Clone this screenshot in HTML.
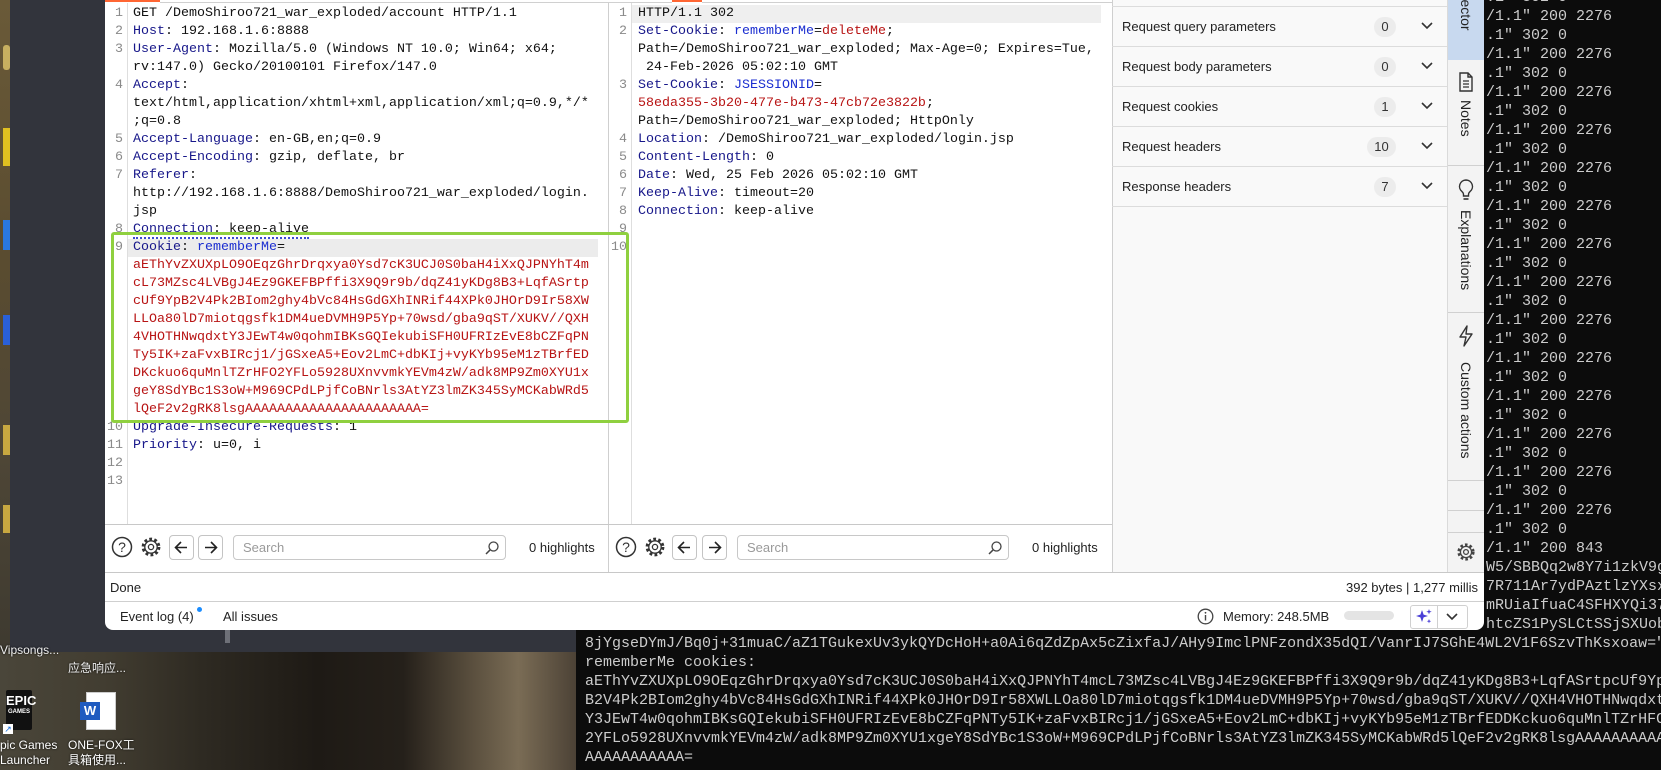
<!DOCTYPE html>
<html><head><meta charset="utf-8"><style>
*{margin:0;padding:0;box-sizing:border-box}
body{width:1661px;height:770px;overflow:hidden;position:relative;background:#0c0c0c;font-family:"Liberation Sans",sans-serif}
.abs{position:absolute}
.term{position:absolute;font-family:"Liberation Mono",monospace;font-size:15px;line-height:19px;color:#cccccc;white-space:pre}
.ed{position:absolute;font-family:"Liberation Mono",monospace;font-size:13.33px;line-height:18px;white-space:pre;color:#111}
.ln{position:absolute;font-family:"Liberation Mono",monospace;font-size:13.33px;line-height:18px;color:#8a8a8a;text-align:right;width:18px;white-space:pre}
.h{color:#17178a}.k{color:#1b2ed0}.v{color:#b81414}
.row{position:absolute;left:1112px;width:335px;height:40px;border-bottom:1px solid #dcdcdc;font-size:13px;color:#222}
.row span.t{position:absolute;left:10px;top:12px}
.badge{position:absolute;top:10px;height:20px;border-radius:10px;background:#ececec;font-size:13px;text-align:center;line-height:20px;color:#333}
.chev{position:absolute;left:308px;top:14px}
.vt{position:absolute;left:1447px;width:37px;writing-mode:vertical-rl;font-size:14px;color:#222;text-align:left}
.btn{position:absolute;width:25px;height:25px;border:1px solid #c4c4c4;border-radius:4px;background:#fff}
.search{position:absolute;height:25px;border:1px solid #c8c8c8;border-radius:4px;background:#fff;font-size:13px;color:#9a9a9a;padding:4px 0 0 9px}
.sep{position:absolute;background:#d0d0d0}
</style></head><body>

<div class="term" style="left:1486px;top:-12.5px">.1" 302 0
/1.1" 200 2276
.1" 302 0
/1.1" 200 2276
.1" 302 0
/1.1" 200 2276
.1" 302 0
/1.1" 200 2276
.1" 302 0
/1.1" 200 2276
.1" 302 0
/1.1" 200 2276
.1" 302 0
/1.1" 200 2276
.1" 302 0
/1.1" 200 2276
.1" 302 0
/1.1" 200 2276
.1" 302 0
/1.1" 200 2276
.1" 302 0
/1.1" 200 2276
.1" 302 0
/1.1" 200 2276
.1" 302 0
/1.1" 200 2276
.1" 302 0
/1.1" 200 2276
.1" 302 0
/1.1" 200 843
W5/SBBQq2w8Y7i1zkV9gXq
7R711Ar7ydPAztlzYXsxQ
mRUiaIfuaC4SFHXYQi37b
htcZS1PySLCtSSjSXUobP</div>

<div class="term" style="left:585px;top:633.5px">8jYgseDYmJ/Bq0j+31muaC/aZ1TGukexUv3ykQYDcHoH+a0Ai6qZdZpAx5cZixfaJ/AHy9ImclPNFzondX35dQI/VanrIJ7SGhE4WL2V1F6SzvThKsxoaw="
rememberMe cookies:
aEThYvZXUXpLO9OEqzGhrDrqxya0Ysd7cK3UCJ0S0baH4iXxQJPNYhT4mcL73MZsc4LVBgJ4Ez9GKEFBPffi3X9Q9r9b/dqZ41yKDg8B3+LqfASrtpcUf9Yp
B2V4Pk2BIom2ghy4bVc84HsGdGXhINRif44XPk0JHOrD9Ir58XWLLOa80lD7miotqgsfk1DM4ueDVMH9P5Yp+70wsd/gba9qST/XUKV//QXH4VHOTHNwqdxt
Y3JEwT4w0qohmIBKsGQIekubiSFH0UFRIzEvE8bCZFqPNTy5IK+zaFvxBIRcj1/jGSxeA5+Eov2LmC+dbKIj+vyKYb95eM1zTBrfEDDKckuo6quMnlTZrHFO
2YFLo5928UXnvvmkYEVm4zW/adk8MP9Zm0XYU1xgeY8SdYBc1S3oW+M969CPdLPjfCoBNrls3AtYZ3lmZK345SyMCKabWRd5lQeF2v2gRK8lsgAAAAAAAAAAA
AAAAAAAAAAA=</div>

<div class="abs" style="left:0;top:652px;width:576px;height:118px;background:linear-gradient(90deg,#4a463a 0%,#423d31 18%,#2e2a22 35%,#1e1a15 55%,#25201a 70%,#5a4f3e 82%,#7a6c55 90%,#4c4236 100%)"></div>
<div class="abs" style="left:0;top:0;width:10px;height:652px;background:linear-gradient(180deg,#6a5a38,#5a4c30 40%,#4e4636 70%,#3e3a30)"></div>
<div class="abs" style="left:3px;top:45px;width:7px;height:25px;background:#c8b060;border-radius:3px"></div>
<div class="abs" style="left:3px;top:128px;width:7px;height:38px;background:#e0c020"></div>
<div class="abs" style="left:3px;top:220px;width:7px;height:30px;background:#2a78e0"></div>
<div class="abs" style="left:3px;top:315px;width:7px;height:30px;background:#2a60d8"></div>
<div class="abs" style="left:3px;top:425px;width:7px;height:30px;background:#c8a840"></div>
<div class="abs" style="left:3px;top:505px;width:7px;height:28px;background:#c8a840"></div>

<div class="abs" style="left:10px;top:0;width:566px;height:652px;background:#32343c"></div>
<div class="abs" style="left:225px;top:630px;width:5px;height:13px;background:#6e7078"></div>
<div class="abs" style="left:0;top:643px;width:60px;font-size:12px;color:#eee;text-shadow:0 0 2px #000">Vipsongs...</div>
<div class="abs" style="left:68px;top:659px;width:70px;font-size:12px;color:#eee;text-shadow:0 0 2px #000;font-family:'Liberation Sans','Noto Sans CJK SC',sans-serif">应急响应...</div>

<div class="abs" style="left:6px;top:690px;width:26px;height:40px;background:#111;border-radius:2px;color:#fff;font-size:13px;font-weight:bold;text-align:center;line-height:14px;padding-top:4px">EPIC<div style="font-size:6px;line-height:8px">GAMES</div></div>
<div class="abs" style="left:3px;top:724px;width:10px;height:10px;background:#fff;color:#1a6fd8;font-size:9px;line-height:10px;text-align:center">↗</div>
<div class="abs" style="left:0;top:738px;font-size:12px;color:#fff;line-height:15px;text-shadow:0 0 2px #000">pic Games<br>Launcher</div>
<div class="abs" style="left:86px;top:692px;width:30px;height:38px;background:#fff;border:1px solid #ccc"></div>
<div class="abs" style="left:80px;top:702px;width:20px;height:18px;background:#1f5bc0;color:#fff;font-weight:bold;font-size:13px;text-align:center;line-height:18px">W</div>
<div class="abs" style="left:68px;top:738px;font-size:12px;color:#fff;line-height:15px;text-shadow:0 0 2px #000;font-family:'Liberation Sans','Noto Sans CJK SC',sans-serif">ONE-FOX工<br>具箱使用...</div>

<div class="abs" style="left:105px;top:0;width:1379px;height:630px;background:#fff;border-bottom-left-radius:8px;border-bottom-right-radius:8px;overflow:hidden"></div>
<div class="abs" style="left:105px;top:0;width:55px;height:2px;background:#ff6633"></div>
<div class="abs" style="left:672px;top:0;width:30px;height:2px;background:#ff6633"></div>
<div class="sep" style="left:160px;top:2px;width:512px;height:1px"></div>
<div class="sep" style="left:702px;top:2px;width:410px;height:1px"></div>

<div class="sep" style="left:127px;top:3px;width:1px;height:521px;background:#dedede"></div>
<div class="abs" style="left:128px;top:239px;width:470px;height:18px;background:#ececec"></div>
<div class="abs" style="left:632px;top:5px;width:469px;height:18px;background:#efefef"></div>
<div class="ln" style="left:105px;top:5px">1
2
3

4


5
6
7


8
9









10
11
12
13</div>
<div class="ed" style="left:133px;top:5px">GET /DemoShiroo721_war_exploded/account HTTP/1.1
<span class="h">Host</span>: 192.168.1.6:8888
<span class="h">User-Agent</span>: Mozilla/5.0 (Windows NT 10.0; Win64; x64;
rv:147.0) Gecko/20100101 Firefox/147.0
<span class="h">Accept</span>:
text/html,application/xhtml+xml,application/xml;q=0.9,*/*
;q=0.8
<span class="h">Accept-Language</span>: en-GB,en;q=0.9
<span class="h">Accept-Encoding</span>: gzip, deflate, br
<span class="h">Referer</span>:
http://192.168.1.6:8888/DemoShiroo721_war_exploded/login.
jsp
<span class="h" style="border-bottom:2px dotted #3a4bd0">Connection</span><span style="border-bottom:2px dotted #3a4bd0">: keep-alive</span>
<span class="h">Cookie</span>: <span class="k">rememberMe</span>=
<span class="v">aEThYvZXUXpLO9OEqzGhrDrqxya0Ysd7cK3UCJ0S0baH4iXxQJPNYhT4m
cL73MZsc4LVBgJ4Ez9GKEFBPffi3X9Q9r9b/dqZ41yKDg8B3+LqfASrtp
cUf9YpB2V4Pk2BIom2ghy4bVc84HsGdGXhINRif44XPk0JHOrD9Ir58XW
LLOa80lD7miotqgsfk1DM4ueDVMH9P5Yp+70wsd/gba9qST/XUKV//QXH
4VHOTHNwqdxtY3JEwT4w0qohmIBKsGQIekubiSFH0UFRIzEvE8bCZFqPN
Ty5IK+zaFvxBIRcj1/jGSxeA5+Eov2LmC+dbKIj+vyKYb95eM1zTBrfED
DKckuo6quMnlTZrHFO2YFLo5928UXnvvmkYEVm4zW/adk8MP9Zm0XYU1x
geY8SdYBc1S3oW+M969CPdLPjfCoBNrls3AtYZ3lmZK345SyMCKabWRd5
lQeF2v2gRK8lsgAAAAAAAAAAAAAAAAAAAAAA=</span>
<span class="h">Upgrade-Insecure-Requests</span>: 1
<span class="h">Priority</span>: u=0, i</div>

<div class="sep" style="left:608px;top:3px;width:1px;height:569px;background:#cfcfcf"></div>

<div class="sep" style="left:631px;top:3px;width:1px;height:521px;background:#dedede"></div>
<div class="ln" style="left:609px;top:5px">1
2


3


4
5
6
7
8
9
10</div>
<div class="ed" style="left:638px;top:5px">HTTP/1.1 302
<span class="h">Set-Cookie</span>: <span class="k">rememberMe</span>=<span class="v">deleteMe</span>;
Path=/DemoShiroo721_war_exploded; Max-Age=0; Expires=Tue,
 24-Feb-2026 05:02:10 GMT
<span class="h">Set-Cookie</span>: <span class="k">JSESSIONID</span>=
<span class="v">58eda355-3b20-477e-b473-47cb72e3822b</span>;
Path=/DemoShiroo721_war_exploded; HttpOnly
<span class="h">Location</span>: /DemoShiroo721_war_exploded/login.jsp
<span class="h">Content-Length</span>: 0
<span class="h">Date</span>: Wed, 25 Feb 2026 05:02:10 GMT
<span class="h">Keep-Alive</span>: timeout=20
<span class="h">Connection</span>: keep-alive</div>

<div class="abs" style="left:111px;top:232px;width:518px;height:191px;border:3px solid #8fd03f;border-radius:3px"></div>

<div class="abs" style="left:1112px;top:0;width:335px;height:572px;background:#f9f9f9;border-left:1px solid #cfcfcf"></div>
<div class="sep" style="left:1112px;top:6px;width:335px;height:1px;background:#dcdcdc"></div>
<div class="row" style="top:7px"><span class="t">Request query parameters</span><div class="badge" style="left:262px;width:22px">0</div><svg class="chev" width="14" height="10"><polyline points="2,2 7,7 12,2" fill="none" stroke="#333" stroke-width="1.6"/></svg></div>
<div class="row" style="top:47px"><span class="t">Request body parameters</span><div class="badge" style="left:262px;width:22px">0</div><svg class="chev" width="14" height="10"><polyline points="2,2 7,7 12,2" fill="none" stroke="#333" stroke-width="1.6"/></svg></div>
<div class="row" style="top:87px"><span class="t">Request cookies</span><div class="badge" style="left:262px;width:22px">1</div><svg class="chev" width="14" height="10"><polyline points="2,2 7,7 12,2" fill="none" stroke="#333" stroke-width="1.6"/></svg></div>
<div class="row" style="top:127px"><span class="t">Request headers</span><div class="badge" style="left:255px;width:29px">10</div><svg class="chev" width="14" height="10"><polyline points="2,2 7,7 12,2" fill="none" stroke="#333" stroke-width="1.6"/></svg></div>
<div class="row" style="top:167px"><span class="t">Response headers</span><div class="badge" style="left:262px;width:22px">7</div><svg class="chev" width="14" height="10"><polyline points="2,2 7,7 12,2" fill="none" stroke="#333" stroke-width="1.6"/></svg></div>

<div class="abs" style="left:1447px;top:0;width:37px;height:572px;background:#f3f3f3;border-left:1px solid #dadada"></div>
<div class="abs" style="left:1448px;top:0;width:36px;height:60px;background:#c8d9ef"></div>
<div class="vt" style="top:-27px;line-height:37px">Inspector</div>
<div class="sep" style="left:1448px;top:165px;width:36px;height:1px"></div>
<svg class="abs" style="left:1458px;top:72px" width="16" height="20"><path d="M2 1h8l4 4v14H2z M10 1v4h4" fill="none" stroke="#333" stroke-width="1.4"/><path d="M5 9h6M5 12h6M5 15h6" stroke="#333" stroke-width="1.2"/></svg>
<div class="vt" style="top:100px;line-height:37px">Notes</div>
<svg class="abs" style="left:1457px;top:178px" width="18" height="24"><path d="M9 2a6.5 6.5 0 0 0-4 11.6c1 .9 1.5 1.8 1.5 3V18h5v-1.4c0-1.2.5-2.1 1.5-3A6.5 6.5 0 0 0 9 2z" fill="none" stroke="#333" stroke-width="1.4"/><path d="M6.5 21h5" stroke="#333" stroke-width="1.6"/></svg>
<div class="vt" style="top:210px;line-height:37px">Explanations</div>
<div class="sep" style="left:1448px;top:312px;width:36px;height:1px"></div>
<svg class="abs" style="left:1457px;top:325px" width="18" height="22"><path d="M10 1L3 12h6l-2 9 8-12H9z" fill="none" stroke="#333" stroke-width="1.4" stroke-linejoin="round"/></svg>
<div class="vt" style="top:362px;line-height:37px">Custom actions</div>
<div class="sep" style="left:1448px;top:480px;width:36px;height:1px"></div>
<div class="sep" style="left:1448px;top:510px;width:36px;height:1px"></div>
<div class="sep" style="left:1448px;top:532px;width:36px;height:1px"></div>
<svg class="abs" style="left:1456px;top:542px" width="20" height="20"><circle cx="10" cy="10" r="7.3" fill="none" stroke="#444" stroke-width="2.6" stroke-dasharray="2.6 2.13"/><circle cx="10" cy="10" r="5.6" fill="#f3f3f3" stroke="#444" stroke-width="1.3"/><circle cx="10" cy="10" r="2.4" fill="none" stroke="#444" stroke-width="1.3"/></svg>

<div class="sep" style="left:105px;top:524px;width:1007px;height:1px;background:#c8c8c8"></div>
<div class="sep" style="left:105px;top:572px;width:1379px;height:1px;background:#c8c8c8"></div>

<svg class="abs" style="left:111px;top:536px" width="22" height="22"><circle cx="11" cy="11" r="9.5" fill="none" stroke="#333" stroke-width="1.5"/><text x="11" y="16" text-anchor="middle" font-family="Liberation Sans" font-size="14" fill="#333">?</text></svg>
<svg class="abs" style="left:140px;top:536px" width="22" height="22"><circle cx="11" cy="11" r="8" fill="none" stroke="#333" stroke-width="2.8" stroke-dasharray="2.8 2.3"/><circle cx="11" cy="11" r="6.2" fill="#fff" stroke="#333" stroke-width="1.3"/><circle cx="11" cy="11" r="2.6" fill="none" stroke="#333" stroke-width="1.3"/></svg>
<div class="btn" style="left:169px;top:535px"><svg width="23" height="23"><path d="M17 11.5H6M11 6l-5.5 5.5L11 17" fill="none" stroke="#222" stroke-width="1.6"/></svg></div>
<div class="btn" style="left:198px;top:535px"><svg width="23" height="23"><path d="M6 11.5h11M12 6l5.5 5.5L12 17" fill="none" stroke="#222" stroke-width="1.6"/></svg></div>
<div class="search" style="left:233px;top:535px;width:273px">Search<svg class="abs" style="left:250px;top:4px" width="16" height="16"><circle cx="9.5" cy="6.5" r="4.5" fill="none" stroke="#444" stroke-width="1.3"/><path d="M6.3 9.7L2 14" stroke="#444" stroke-width="1.5"/></svg></div>
<div class="abs" style="left:529px;top:540px;font-size:13px;color:#222">0 highlights</div>

<svg class="abs" style="left:615px;top:536px" width="22" height="22"><circle cx="11" cy="11" r="9.5" fill="none" stroke="#333" stroke-width="1.5"/><text x="11" y="16" text-anchor="middle" font-family="Liberation Sans" font-size="14" fill="#333">?</text></svg>
<svg class="abs" style="left:644px;top:536px" width="22" height="22"><circle cx="11" cy="11" r="8" fill="none" stroke="#333" stroke-width="2.8" stroke-dasharray="2.8 2.3"/><circle cx="11" cy="11" r="6.2" fill="#fff" stroke="#333" stroke-width="1.3"/><circle cx="11" cy="11" r="2.6" fill="none" stroke="#333" stroke-width="1.3"/></svg>
<div class="btn" style="left:672px;top:535px"><svg width="23" height="23"><path d="M17 11.5H6M11 6l-5.5 5.5L11 17" fill="none" stroke="#222" stroke-width="1.6"/></svg></div>
<div class="btn" style="left:702px;top:535px"><svg width="23" height="23"><path d="M6 11.5h11M12 6l5.5 5.5L12 17" fill="none" stroke="#222" stroke-width="1.6"/></svg></div>
<div class="search" style="left:737px;top:535px;width:272px">Search<svg class="abs" style="left:249px;top:4px" width="16" height="16"><circle cx="9.5" cy="6.5" r="4.5" fill="none" stroke="#444" stroke-width="1.3"/><path d="M6.3 9.7L2 14" stroke="#444" stroke-width="1.5"/></svg></div>
<div class="abs" style="left:1032px;top:540px;font-size:13px;color:#222">0 highlights</div>

<div class="abs" style="left:110px;top:580px;font-size:13px;color:#222">Done</div>
<div class="abs" style="left:1200px;top:580px;width:278px;text-align:right;font-size:13px;color:#222">392 bytes | 1,277 millis</div>
<div class="sep" style="left:105px;top:601px;width:1379px;height:1px;background:#cfcfcf"></div>

<div class="abs" style="left:120px;top:609px;font-size:13px;color:#222">Event log (4)</div>
<div class="abs" style="left:197px;top:607px;width:5px;height:5px;border-radius:50%;background:#1a8cff"></div>
<div class="abs" style="left:223px;top:609px;font-size:13px;color:#222">All issues</div>
<svg class="abs" style="left:1197px;top:608px" width="17" height="17"><circle cx="8.5" cy="8.5" r="7.3" fill="none" stroke="#444" stroke-width="1.3"/><path d="M8.5 7v5.5" stroke="#444" stroke-width="1.4"/><circle cx="8.5" cy="4.8" r=".9" fill="#444"/></svg>
<div class="abs" style="left:1223px;top:609px;font-size:13px;color:#222">Memory: 248.5MB</div>
<div class="abs" style="left:1344px;top:611px;width:50px;height:9px;border-radius:5px;background:#e4e4e4"></div>
<div class="abs" style="left:1410px;top:605px;width:58px;height:24px;border:1px solid #d0d0d0;border-radius:3px;background:#fff"></div>
<div class="sep" style="left:1437px;top:606px;width:1px;height:22px"></div>
<svg class="abs" style="left:1413px;top:607px" width="22" height="20"><path d="M9 3l1.6 4.6L15 9l-4.4 1.4L9 15l-1.6-4.6L3 9l4.4-1.4z" fill="#4a3fd6"/><path d="M16 2l.7 2 2 .7-2 .7-.7 2-.7-2-2-.7 2-.7z" fill="#4a3fd6"/><path d="M16 12l.6 1.6 1.6.6-1.6.6-.6 1.6-.6-1.6-1.6-.6 1.6-.6z" fill="#4a3fd6"/></svg>
<svg class="abs" style="left:1445px;top:612px" width="14" height="10"><polyline points="2,2 7,7 12,2" fill="none" stroke="#333" stroke-width="1.6"/></svg>

</body></html>
